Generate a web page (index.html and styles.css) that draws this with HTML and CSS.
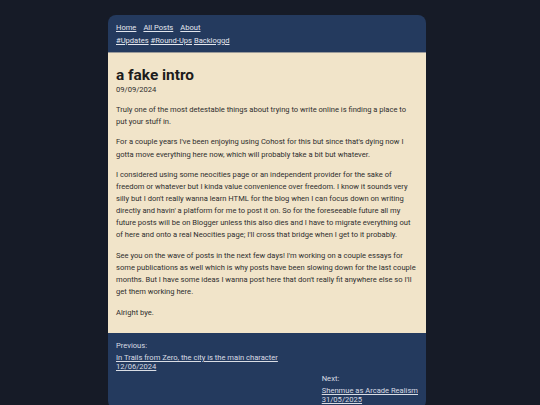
FILE: index.html
```html
<!DOCTYPE html>
<html lang="en">
<head>
<meta charset="utf-8">
<title>a fake intro</title>
<link rel="stylesheet" href="styles.css">
</head>
<body>
<div class="page">
  <header class="head">
    <nav class="nav-main">
      <a href="#">Home</a>
      <a href="#">All Posts</a>
      <a href="#">About</a>
    </nav>
    <nav class="nav-tags">
      <a href="#">#Updates</a> <a href="#">#Round-Ups</a> <a href="#">Backloggd</a>
    </nav>
  </header>
  <main class="post">
    <h1 class="title">a fake intro</h1>
    <div class="date">09/09/2024</div>
    <p>Truly one of the most detestable things about trying to write online is finding a place to put your stuff in.</p>
    <p>For a couple years I've been enjoying using Cohost for this but since that's dying now I gotta move everything here now, which will probably take a bit but whatever.</p>
    <p>I considered using some neocities page or an independent provider for the sake of freedom or whatever but I kinda value convenience over freedom. I know it sounds very silly but I don't really wanna learn HTML for the blog when I can focus down on writing directly and havin' a platform for me to post it on. So for the foreseeable future all my future posts will be on Blogger unless this also dies and I have to migrate everything out of here and onto a real Neocities page; I'll cross that bridge when I get to it probably.</p>
    <p>See you on the wave of posts in the next few days! I'm working on a couple essays for some publications as well which is why posts have been slowing down for the last couple months. But I have some ideas I wanna post here that don't really fit anywhere else so I'll get them working here.</p>
    <p>Alright bye.</p>
  </main>
  <footer class="foot">
    <div class="pager prev">
      <div class="label">Previous:</div>
      <a href="#">In Trails from Zero, the city is the main character<br>12/06/2024</a>
    </div>
    <div class="pager next">
      <div class="label">Next:</div>
      <a href="#">Shenmue as Arcade Realism<br>31/05/2025</a>
    </div>
  </footer>
</div>
</body>
</html>
```

FILE: styles.css
```css
html, body {
  margin: 0;
  padding: 0;
}
body {
  background: #161b27;
  font-family: Roboto, "Liberation Sans", sans-serif;
  font-size: 7.58px;
  color: #222;
  padding-top: 15px;
}
.page {
  width: 318px;
  margin: 0 0 0 108px;
  border-radius: 8px;
  overflow: hidden;
}
.head {
  background: #243a5e;
  padding: 7px 8px 5px;
  border-bottom: 1px solid #9a9a9a;
}
.head a {
  color: #e3e6ee;
}
.nav-main {
  display: flex;
  gap: 7px;
  line-height: 12.5px;
}
.nav-tags {
  line-height: 12.5px;
}
.post {
  background: #f1e4c9;
  padding: 13px 8px 6px;
  color: #2e2e2e;
}
.title {
  font-size: 15.4px;
  font-weight: 700;
  margin: 0;
  line-height: 19px;
  color: #1c1c1c;
}
.date {
  line-height: 10px;
  margin-bottom: 9px;
}
.post p {
  margin: 0 0 8.3px;
  line-height: 12.1px;
}
.foot {
  background: #243a5e;
  padding: 7px 8px 4px;
  color: #d9dce4;
  display: flex;
  flex-direction: column;
}
.pager {
  line-height: 9.3px;
}
.pager .label {
  margin-bottom: 1px;
  line-height: 12px;
}
.pager a {
  color: #d9dce4;
}
.next {
  align-self: flex-end;
  margin-top: 1.6px;
}
```
